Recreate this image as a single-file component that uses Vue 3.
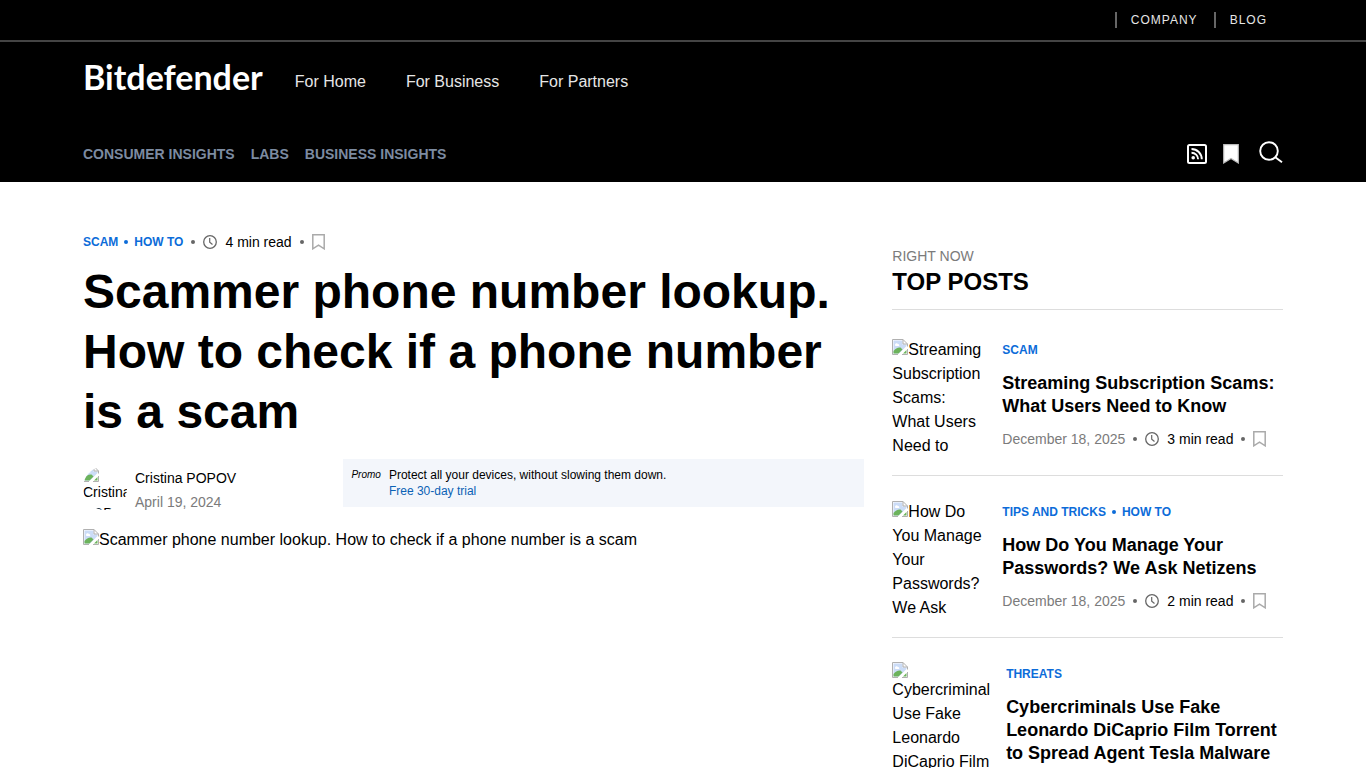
<script setup>
const posts = [
  {
    alt: 'Streaming Subscription Scams: What Users Need to',
    tags: ['Scam'],
    title: 'Streaming Subscription Scams: What Users Need to Know',
    date: 'December 18, 2025',
    read: '3 min read'
  },
  {
    alt: 'How Do You Manage Your Passwords? We Ask',
    tags: ['Tips and Tricks', 'How to'],
    title: 'How Do You Manage Your Passwords? We Ask Netizens',
    date: 'December 18, 2025',
    read: '2 min read'
  },
  {
    alt: 'Cybercriminal Use Fake Leonardo DiCaprio Film',
    stacked: true,
    tags: ['Threats'],
    title: 'Cybercriminals Use Fake Leonardo DiCaprio Film Torrent to Spread Agent Tesla Malware'
  }
];
</script>

<template>
  <div class="page">
    <svg class="sprite" aria-hidden="true">
      <symbol id="i-missing" viewBox="0 0 16 16">
        <path d="M.5.5H11L15.500 5v10.500H.5z" fill="#fff" />
        <path d="M1.500 1.500h9V5.500h4V7l-7.500 7.500H1.500z" fill="#cbdcf7" />
        <path d="M3 5.700a1.600 1.600 0 0 1 3-.6 1.200 1.200 0 0 1 1 2H4a1.200 1.200 0 0 1-1-1.400z" fill="#fff" />
        <path d="M1.500 14.500v-2.500c2-2.500 4.500-4 7-3.500l2 2-4 4z" fill="#6cb35c" />
        <path d="M11 14.500l3.500-3.500v3.500z" fill="#6cb35c" />
        <path d="M6 15.500H.5V.5H11L15.500 5v2.500M11 .5V5h4.500M15.500 10v5.500H10" fill="none" stroke="#b0b0b0" />
      </symbol>
      <symbol id="i-clock" viewBox="0 0 14 14">
        <circle cx="7" cy="7" r="6.300" fill="none" stroke="#666" stroke-width="1.300" />
        <path d="M6.700 3v4.200l2.800 2.300" fill="none" stroke="#666" stroke-width="1.200" />
      </symbol>
      <symbol id="i-bookmark" viewBox="0 0 13 16">
        <path d="M.8.8h11.400v14L6.500 11.200.8 14.800z" fill="none" stroke="#aaa" stroke-width="1.500" />
      </symbol>
    </svg>

    <header class="header">
      <div class="topbar">
        <nav class="container topbar-nav">
          <a href="#">Company</a>
          <a href="#">Blog</a>
        </nav>
      </div>
      <div class="container main-nav">
        <a href="#" class="logo">Bitdefender</a>
        <nav class="main-links">
          <a href="#">For Home</a>
          <a href="#">For Business</a>
          <a href="#">For Partners</a>
        </nav>
      </div>
      <div class="container sub-nav">
        <nav class="sub-links">
          <a href="#">Consumer Insights</a>
          <a href="#">Labs</a>
          <a href="#">Business Insights</a>
        </nav>
        <div class="tools">
          <a href="#" aria-label="RSS feed">
            <svg width="20" height="20" viewBox="0 0 20 20" fill="none" stroke="#fff">
              <rect x="1" y="1" width="18" height="18" rx="1.500" stroke-width="2" />
              <path d="M4.500 5a10.300 10.300 0 0 1 10.300 10.300M4.500 8.700a6.600 6.600 0 0 1 6.600 6.600" stroke-width="1.900" />
              <circle cx="6.200" cy="13.700" r="1.800" fill="#fff" stroke="none" />
            </svg>
          </a>
          <a href="#" aria-label="Bookmarks">
            <svg width="16" height="20" viewBox="0 0 16 20">
              <path d="M.7.7h14.600v18.300L8 14.500.7 19z" fill="#fff" stroke="#bbb" stroke-width="1.200" />
            </svg>
          </a>
          <button type="button" class="search" aria-label="Search">
            <svg width="24" height="24" viewBox="0 0 24 24" fill="none" stroke="#fff" stroke-width="1.900">
              <circle cx="10" cy="11" r="8.800" />
              <path d="M16.300 17.200l6.700 5" />
            </svg>
          </button>
        </div>
      </div>
    </header>

    <div class="container layout">
      <main class="article">
        <div class="meta article-meta">
          <span class="tags"><a href="#">Scam</a><a href="#">How to</a></span>
          <i class="dot"></i>
          <svg class="clock"><use href="#i-clock" /></svg>
          <span class="read">4 min read</span>
          <i class="dot"></i>
          <button type="button" class="save" aria-label="Save article">
            <svg><use href="#i-bookmark" /></svg>
          </button>
        </div>
        <h1 class="title">Scammer phone number lookup. How to check if a phone number is a scam</h1>
        <div class="byline">
          <div class="author">
            <div class="avatar stacked"><svg class="missing"><use href="#i-missing" /></svg>Cristina POPOV</div>
            <div class="author-info">
              <a href="#" class="author-name">Cristina POPOV</a>
              <span class="date">April 19, 2024</span>
            </div>
          </div>
          <aside class="promo">
            <em>Promo</em>
            <p>
              Protect all your devices, without slowing them down.<br />
              <a href="#">Free 30-day trial</a>
            </p>
          </aside>
        </div>
        <div class="cover"><svg class="missing"><use href="#i-missing" /></svg>Scammer phone number lookup. How to check if a phone number is a scam</div>
      </main>

      <aside class="sidebar">
        <p class="kicker">Right now</p>
        <h2 class="sidebar-title">Top posts</h2>
        <article v-for="post in posts" :key="post.title" class="post">
          <div class="thumb" :class="{ stacked: post.stacked }"><svg class="missing"><use href="#i-missing" /></svg>{{ post.alt }}</div>
          <div class="post-body">
            <div class="tags">
              <a v-for="tag in post.tags" :key="tag" href="#">{{ tag }}</a>
            </div>
            <h3 class="post-title"><a href="#">{{ post.title }}</a></h3>
            <div v-if="post.date" class="meta">
              <span class="date">{{ post.date }}</span>
              <i class="dot"></i>
              <svg class="clock"><use href="#i-clock" /></svg>
              <span class="read">{{ post.read }}</span>
              <i class="dot"></i>
              <button type="button" class="save" aria-label="Save post">
                <svg><use href="#i-bookmark" /></svg>
              </button>
            </div>
          </div>
        </article>
      </aside>
    </div>
  </div>
</template>

<style>
body {
  margin: 0;
  background: #fff;
}
</style>

<style scoped>
.page {
  font-family: "Liberation Sans", Arial, sans-serif;
  font-size: 16px;
  line-height: 24px;
  color: #000;
}

a {
  color: inherit;
  text-decoration: none;
}

h1,
h2,
h3,
p {
  margin: 0;
}

button {
  display: flex;
  padding: 0;
  border: 0;
  background: none;
  cursor: pointer;
}

.sprite {
  display: none;
}

.container {
  box-sizing: border-box;
  width: 100%;
  max-width: 1200px;
  margin: 0 auto;
}

/* header */
.header {
  background: #000;
  color: #fff;
}

.topbar {
  border-bottom: 2px solid #444;
}

.topbar-nav {
  display: flex;
  justify-content: flex-end;
  align-items: center;
  height: 40px;
  padding-right: 16px;
  font-size: 12px;
  line-height: 16px;
  letter-spacing: 1px;
  color: #e6e6e6;
  text-transform: uppercase;
}

.topbar-nav a {
  padding-left: 14px;
  margin-left: 16px;
  border-left: 2px solid #666;
}

.main-nav {
  display: flex;
  align-items: center;
  gap: 32px;
  height: 80px;
}

.logo {
  padding-bottom: 10px;
  font-family: Lato, sans-serif;
  font-size: 34px;
  line-height: 40px;
  font-weight: 700;
}

.main-links {
  display: flex;
  gap: 40px;
  color: #e6e6e6;
}

.sub-nav {
  display: flex;
  justify-content: space-between;
  align-items: center;
  height: 60px;
  padding-top: 4px;
}

.sub-links {
  display: flex;
  gap: 16px;
  font-size: 14px;
  font-weight: 700;
  color: #7c8ba1;
  text-transform: uppercase;
}

.tools {
  display: flex;
  align-items: center;
  gap: 16px;
}

.tools a {
  display: flex;
}

.search {
  margin-left: 4px;
  padding-bottom: 4px;
}

/* article */
.layout {
  display: grid;
  grid-template-columns: 2fr 1fr;
  gap: 28px;
}

.article {
  padding-top: 48px;
}

.meta {
  display: flex;
  align-items: center;
  font-size: 14px;
}

.dot {
  width: 4px;
  height: 4px;
  margin: 0 8px;
  border-radius: 50%;
  background: #666;
}

.clock {
  width: 14px;
  height: 14px;
}

.read {
  margin-left: 8px;
}

.save svg {
  width: 13px;
  height: 16px;
}

.date {
  color: #7b7b7b;
}

.tags {
  font-size: 12px;
  line-height: 24px;
  font-weight: 700;
  color: #0c6cd9;
  text-transform: uppercase;
}

.tags a + a::before {
  content: "";
  display: inline-block;
  width: 4px;
  height: 4px;
  margin: 0 6px;
  border-radius: 50%;
  background: currentColor;
  vertical-align: 2px;
}

.title {
  margin-top: 8px;
  font-size: 48px;
  line-height: 60px;
}

.byline {
  display: grid;
  grid-template-columns: 1fr 2fr;
  margin-top: 17px;
}

.author {
  display: flex;
  gap: 8px;
  padding-top: 7px;
  font-size: 14px;
}

.avatar {
  width: 44px;
  height: 44px;
  border-radius: 50%;
  line-height: 21px;
  overflow: hidden;
}

.author-info {
  display: flex;
  flex-direction: column;
}

.promo {
  display: flex;
  gap: 8px;
  box-sizing: border-box;
  height: 48px;
  padding: 8px;
  background: #f3f6fb;
  font-size: 12px;
  line-height: 16px;
}

.promo em {
  font-size: 10px;
}

.promo a {
  color: #0b62b5;
}

.missing {
  width: 16px;
  height: 16px;
  vertical-align: baseline;
}

.stacked .missing {
  display: block;
}

.cover {
  margin-top: 14px;
}

/* sidebar */
.sidebar {
  padding-top: 62px;
}

.kicker {
  font-size: 14px;
  color: #7b7b7b;
  text-transform: uppercase;
}

.sidebar-title {
  padding-bottom: 13px;
  margin-bottom: 4px;
  border-bottom: 1px solid #ddd;
  font-size: 24px;
  line-height: 28px;
  text-transform: uppercase;
}

.post {
  display: grid;
  grid-template-columns: minmax(94px, min-content) 1fr;
  gap: 16px;
  padding: 24px 0 17px;
  border-bottom: 1px solid #ddd;
}

.thumb {
  min-height: 120px;
}

.post-title {
  margin: 10px 0 9px;
  font-size: 18px;
  line-height: 23px;
}
</style>
